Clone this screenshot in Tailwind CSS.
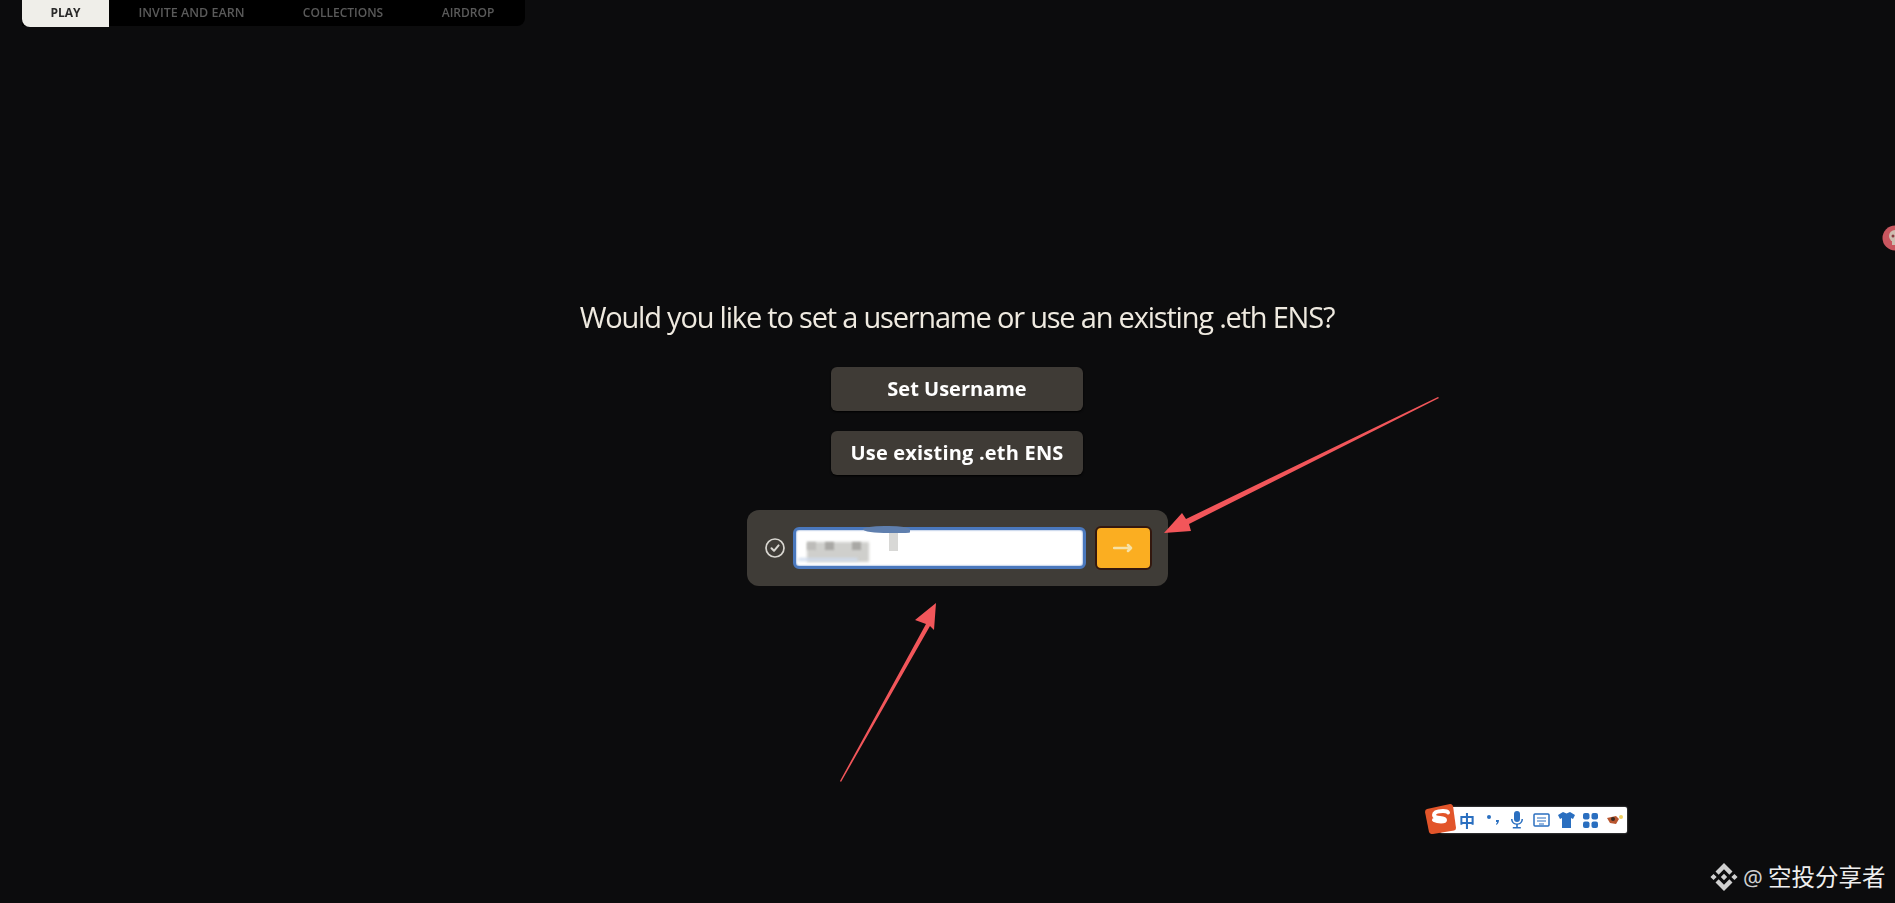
<!DOCTYPE html>
<html lang="en">
<head>
  <meta charset="UTF-8" />
  <title>Set username</title>
  <script src="https://cdn.jsdelivr.net/npm/@tailwindcss/browser@4"></script>
</head>
<body class="bg-[#0c0c0d] h-[903px] w-[1895px] overflow-hidden relative font-['Open_Sans',sans-serif]">

  <!-- top nav -->
  <nav class="ml-[22px] w-[503px] h-[26px] bg-black rounded-br-lg flex items-center text-[12px] font-semibold text-[#5a5a5a] blur-[0.5px]">
    <a class="w-[87px] h-[27px] bg-[#efeee9] text-[#2a2a2a] font-bold rounded-bl-lg flex items-center justify-center">PLAY</a>
    <a class="ml-[29px] w-[107px] text-[12.500px] whitespace-nowrap text-center">INVITE AND EARN</a>
    <a class="ml-[57px] w-[82px] whitespace-nowrap text-center">COLLECTIONS</a>
    <a class="ml-[57px] w-[54px] whitespace-nowrap text-center">AIRDROP</a>
  </nav>

  <main class="flex flex-col items-center mt-[268px] pl-[20px] pr-[1px]">
    <h1 class="text-[29px] leading-[46px] text-[#efeae0] tracking-[-1.2px] whitespace-nowrap blur-[0.4px]">Would you like to set a username or use an existing .eth ENS?</h1>

    <button class="mt-[27px] w-[252px] h-[44px] bg-[#3f3b36] rounded-md text-white text-[20px] font-bold shadow-[0_1px_2px_#000] blur-[0.4px]">Set Username</button>
    <button class="mt-[20px] w-[252px] h-[44px] bg-[#3f3b36] rounded-md text-white text-[20px] tracking-[0.2px] font-bold shadow-[0_1px_2px_#000] blur-[0.4px]">Use existing .eth ENS</button>

    <div class="mt-[35px] w-[421px] h-[76px] bg-[#3f3c37] rounded-xl flex items-center pl-[18px] pr-[16px]">
      <svg class="w-[20px] h-[20px] shrink-0" viewBox="0 0 20 20" fill="none" stroke="#d8d6d0" stroke-width="1.700" stroke-linecap="round" stroke-linejoin="round">
        <circle cx="10" cy="10" r="9"/>
        <path d="M6.500 10.300l2.500 2.500 4.600-5.400" stroke-width="2"/>
      </svg>
      <div class="ml-[8px] relative w-[294px] h-[42px] bg-white rounded-md border-[3px] border-[#4a78bd] shadow-[inset_0_0_2px_#4a78bd]">
        <!-- blurred out address -->
        <div class="absolute left-[11px] top-[12px] w-[62px] h-[20px] bg-[#cfcfcc] blur-[1.500px]"></div>
        <div class="absolute left-[11px] top-[12px] w-[9px] h-[8px] bg-[#bdbcb9] blur-[1px]"></div>
        <div class="absolute left-[29px] top-[12px] w-[9px] h-[8px] bg-[#a9a8a5] blur-[1px]"></div>
        <div class="absolute left-[56px] top-[12px] w-[9px] h-[8px] bg-[#a9a8a5] blur-[1px]"></div>
        <div class="absolute left-[2px] top-[28px] w-[60px] h-[3px] bg-[#cfdcee] blur-[1.500px] rounded-full"></div>
        <div class="absolute left-[93px] top-[0px] w-[9px] h-[21px] bg-[#d8d8d6]"></div>
        <div class="absolute left-[67px] top-[-4px] w-[47px] h-[7px] bg-[#5f7fae] rounded-[50%_50%_10%_60%]"></div>
      </div>
      <button class="ml-[9px] w-[57px] h-[44px] bg-[#fbae21] rounded-md border-2 border-[#33180f] flex items-center justify-center shrink-0">
        <svg class="w-[20px] h-[10px]" viewBox="0 0 20 10" fill="none" stroke="#f6e1a6" stroke-width="2.500" stroke-linecap="round" stroke-linejoin="round">
          <path d="M1 5h16M15 2l3 3-3 3"/>
        </svg>
      </button>
    </div>
  </main>

  <!-- side widget cut by the window edge -->
  <svg class="absolute left-[1882px] top-[225px] w-[26px] h-[26px]" viewBox="0 0 26 26">
    <circle cx="13" cy="13" r="12.500" fill="#c9565f"/>
    <circle cx="13" cy="11" r="6" fill="#cdbdb0"/>
    <rect x="10" y="15" width="6" height="5" fill="#cdbdb0"/>
    <circle cx="11" cy="11" r="1.500" fill="#8c3a42"/>
  </svg>

  <!-- sogou ime bar -->
  <div class="absolute left-[1440px] top-[807px] w-[187px] h-[26px] bg-white rounded-[2px] flex items-center pl-[19px] gap-[8px] text-[#2a6fc0] shadow-[0_0_2px_#888] blur-[0.3px]">
    <span class="w-[18px] text-[16px] leading-none font-bold font-['Noto_Sans_CJK_SC',sans-serif]">中</span>
    <svg class="w-[16px] h-[16px]" viewBox="0 0 16 16" fill="currentColor"><circle cx="4" cy="5" r="2"/><path d="M11 8h3c0 2-1 4-2.500 5l-.5-1c.5-.5 1-1 1-2h-1z"/></svg>
    <svg class="w-[16px] h-[18px]" viewBox="0 0 16 18" fill="currentColor"><rect x="5" y="0" width="6" height="11" rx="3"/><path d="M2 8h1.500c0 3 2 4.500 4.500 4.500s4.500-1.500 4.500-4.500H14c0 3.500-2.500 5.500-5.200 5.800V16h3v1.500H3.800V16h3.400v-2.200C4.500 13.500 2 11.500 2 8z"/></svg>
    <svg class="w-[17px] h-[14px]" viewBox="0 0 17 14" fill="none" stroke="currentColor" stroke-width="1.500"><rect x="1" y="1" width="15" height="12" rx="1"/><path d="M4 5h9M4 8h9M6 11h5" stroke-width="1.200"/></svg>
    <svg class="w-[17px] h-[16px]" viewBox="0 0 17 16" fill="currentColor"><path d="M5 0l3.500 1.500L12 0l5 3-2 4-2-1v10H4V6L2 7 0 3z"/></svg>
    <svg class="w-[15px] h-[15px]" viewBox="0 0 15 15" fill="currentColor"><rect x="0" y="0" width="6.500" height="6.500" rx="2"/><rect x="8.500" y="0" width="6.500" height="6.500" rx="2"/><rect x="0" y="8.500" width="6.500" height="6.500" rx="2"/><rect x="8.500" y="8.500" width="6.500" height="6.500" rx="2"/></svg>
    <svg class="w-[18px] h-[12px]" viewBox="0 0 18 12"><path d="M1 4l9-2 3 3-3 5-6-1z" fill="#b9562f"/><circle cx="7" cy="5" r="2" fill="#3a2a20"/><circle cx="15" cy="3" r="2" fill="#f0d060"/></svg>
  </div>
  <svg class="absolute left-[1425px] top-[803px] w-[31px] h-[31px]" viewBox="0 0 31 31">
    <path d="M2 6l23-5q2-.3 3 2l3 22q0 2-2 2.500L8 31q-3 .5-4-2L0 9q0-2.500 2-3z" fill="#e2552a"/>
    <path d="M23 9.500q-1-1.500-5-1.500-9 0-9 4 0 2.500 6 3 5 .5 5 2 0 1.500-4 1.500-4 0-7-1.500" fill="none" stroke="#fff" stroke-width="4" stroke-linecap="round"/>
  </svg>

  <!-- binance square watermark -->
  <div class="absolute left-[1710px] top-[862px] flex items-center h-[30px] text-[#efefef]">
    <svg class="w-[28px] h-[28px]" viewBox="0 -2 128 132" fill="#d0d0d0">
      <path d="M38.700 53.200L64 27.900l25.300 25.300 14.700-14.700L64-1.500 24 38.500zM0 64l14.700-14.700L29.400 64 14.700 78.700zM38.700 74.800L64 100.100l25.300-25.300 14.700 14.700L64 129.500 24 89.500zM98.600 64l14.700-14.700L128 64l-14.700 14.700zM78.900 64L64 49.100 49.100 64 64 78.900z"/>
    </svg>
    <span class="ml-[5px] w-[24px] text-[22px] leading-none text-[#cfcfcf] font-['Noto_Sans',sans-serif]">@</span>
    <span class="ml-[1px] text-[23.500px] leading-none whitespace-nowrap font-['Noto_Sans_CJK_SC',sans-serif]">空投分享者</span>
  </div>

  <!-- red annotation arrows drawn on the screenshot -->
  <svg class="absolute inset-0 w-[1895px] h-[903px] pointer-events-none" viewBox="0 0 1895 903" fill="#f2565a">
    <path d="M1438 397L1439 398 1189 524 1191 531 1164 533 1182 513 1186 519z"/>
    <path d="M841 782L840 781 926 624 915 620 936 603 934 630 930 626z"/>
  </svg>
</body>
</html>
